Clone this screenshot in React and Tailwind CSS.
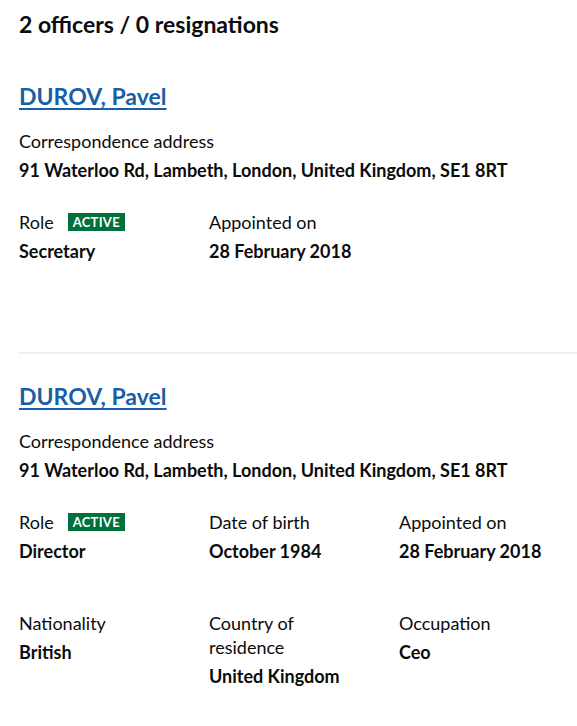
import React from 'react';

const officers = [
  {
    name: 'DUROV, Pavel',
    address: '91 Waterloo Rd, Lambeth, London, United Kingdom, SE1 8RT',
    rows: [
      [
        { label: 'Role', value: 'Secretary', badge: true },
        { label: 'Appointed on', value: '28 February 2018' },
      ],
    ],
  },
  {
    name: 'DUROV, Pavel',
    address: '91 Waterloo Rd, Lambeth, London, United Kingdom, SE1 8RT',
    rows: [
      [
        { label: 'Role', value: 'Director', badge: true },
        { label: 'Date of birth', value: 'October 1984' },
        { label: 'Appointed on', value: '28 February 2018' },
      ],
      [
        { label: 'Nationality', value: 'British' },
        { label: 'Country of residence', value: 'United Kingdom' },
        { label: 'Occupation', value: 'Ceo' },
      ],
    ],
  },
];

function Field({ label, value, badge }) {
  return (
    <div className="w-[190px] shrink-0 pr-[30px]">
      <div className="text-[18px] leading-6 flex items-center">
        {label}
        {badge && (
          <span className="ml-[14px] bg-[#00703c] text-white text-[13px] font-bold leading-[18px] px-[5px] tracking-[0.3px]">
            ACTIVE
          </span>
        )}
      </div>
      <div className="text-[18px] leading-6 font-bold mt-[5px]">{value}</div>
    </div>
  );
}

export default function App() {
  return (
    <div className="min-h-screen bg-white text-[#0b0c0c] pl-[19px] pt-[10px]" style={{ fontFamily: 'Lato, "Open Sans", sans-serif' }}>
      <h2 className="text-[23px] leading-7 font-bold">2 officers / 0 resignations</h2>

      {officers.map((o, i) => (
        <div key={i} className={i > 0 ? 'border-t-2 border-[#eeeeee] pt-[26px]' : 'pt-[42px]'}>
          <a href="#" className="block w-fit text-[23px] leading-8 font-bold text-[#1a5fa6] underline underline-offset-[3px] decoration-2">
            {o.name}
          </a>
          <div className="mt-[17px] text-[18px] leading-6">Correspondence address</div>
          <div className="mt-[5px] text-[18px] leading-6 font-bold">{o.address}</div>
          <div className="mt-[28px]">
            {o.rows.map((r, j) => (
              <div key={j} className={'flex ' + (j > 0 ? 'mt-[48px]' : '')}>
                {r.map(f => <Field key={f.label} {...f} />)}
              </div>
            ))}
          </div>
          <div className={i === 0 ? 'h-[89px]' : 'h-[30px]'} />
        </div>
      ))}
    </div>
  );
}
